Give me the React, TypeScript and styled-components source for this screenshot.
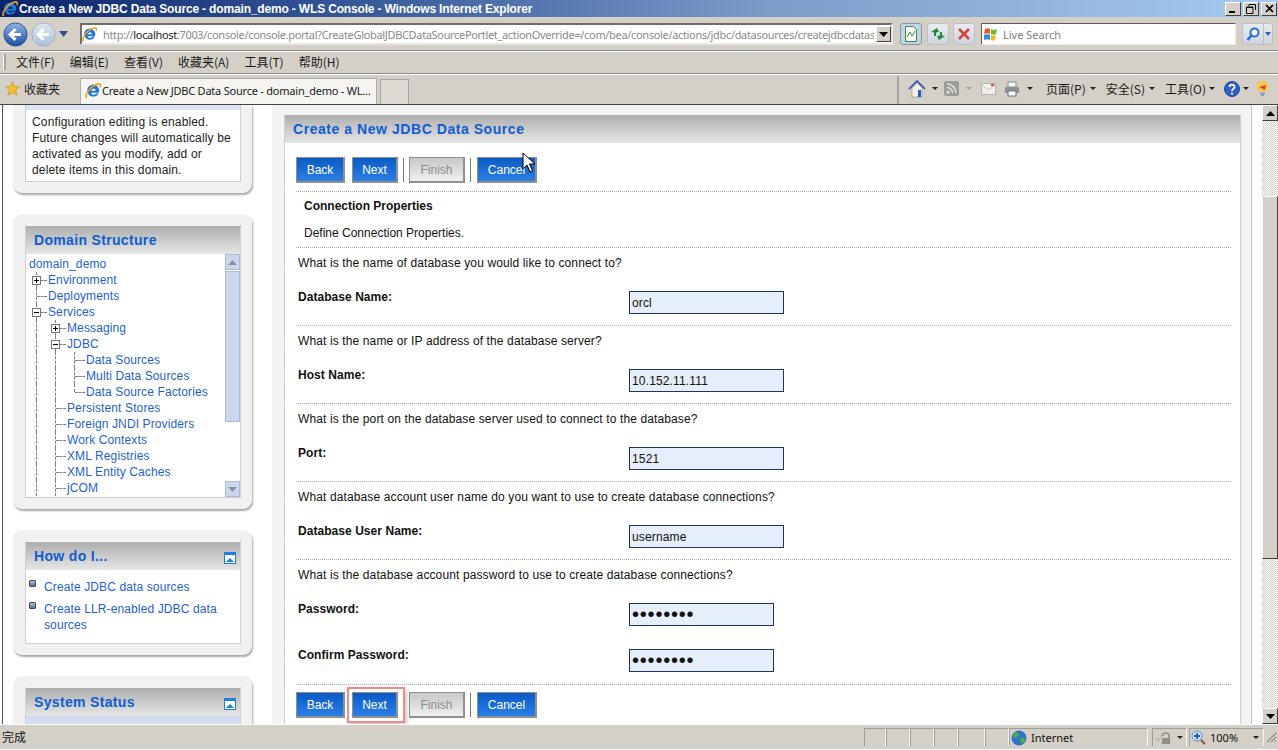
import styled, { createGlobalStyle } from "styled-components";

const GlobalStyle = createGlobalStyle`
  html, body {
    margin: 0;
    padding: 0;
    overflow: hidden;
  }
  body {
    font-family: "Liberation Sans", Arial, sans-serif;
    font-size: 12px;
  }
`;

const UI_FONT = `"Noto Sans", "Noto Sans CJK SC", sans-serif`;

const Page = styled.div`
  width: 1278px;
  height: 750px;
  display: flex;
  flex-direction: column;
  overflow: hidden;
  background: #d4d0c8;
`;

/* browser chrome */
const TitleBar = styled.div`
  height: 17px;
  flex: none;
  display: flex;
  align-items: center;
  padding: 0 1px 0 2px;
  background: linear-gradient(90deg, #0a246a 0%, #3a5d9c 30%, #7d9bc9 60%, #a6caf0 100%);
`;

const TitleText = styled.div`
  flex: 1;
  margin-left: 1px;
  color: #fff;
  font: bold 12px "Liberation Sans", sans-serif;
  letter-spacing: -0.165px;
  white-space: nowrap;
`;

const WindowButton = styled.div`
  width: 16px;
  height: 14px;
  margin-left: 2px;
  display: flex;
  align-items: center;
  justify-content: center;
  background: #d4d0c8;
  border: 1px solid;
  border-color: #fff #404040 #404040 #fff;
  box-sizing: border-box;
`;

const AddressBar = styled.div`
  height: 34px;
  flex: none;
  display: flex;
  align-items: center;
  padding: 1px 6px 0 3px;
  border-bottom: 1px solid #8c8a84;
  box-sizing: border-box;
`;

const NavGroup = styled.div`
  width: 77px;
  height: 28px;
  flex: none;
  display: flex;
  align-items: center;
  gap: 3px;
`;

const AddressBox = styled.div`
  width: 813px;
  height: 22px;
  flex: none;
  display: flex;
  align-items: center;
  background: #fff;
  border: 2px solid;
  border-color: #6f6e69 #e8e6e0 #e8e6e0 #6f6e69;
  box-sizing: border-box;
`;

const UrlText = styled.div`
  width: 774px;
  margin-left: 6px;
  overflow: hidden;
  white-space: nowrap;
  color: #8a8a8a;
  font: 11px ${UI_FONT};
  letter-spacing: -0.33px;
  b {
    font-weight: 400;
    color: #222;
  }
`;

const ComboArrow = styled.div`
  width: 15px;
  height: 16px;
  margin-left: 2px;
  display: flex;
  align-items: center;
  justify-content: center;
  background: #d4d0c8;
  border: 1px solid;
  border-color: #fff #404040 #404040 #fff;
  box-sizing: border-box;
`;

const GlassButton = styled.div<{ $gap: number; $active?: boolean }>`
  width: 22px;
  height: 22px;
  flex: none;
  margin-left: ${(p) => p.$gap}px;
  display: flex;
  align-items: center;
  justify-content: center;
  border: 1px solid ${(p) => (p.$active ? "#7f97ad" : "#bdbfc4")};
  border-radius: 3px;
  background: ${(p) => (p.$active ? "#c5d5df" : "linear-gradient(#e9ecf2, #cdd3de)")};
  box-sizing: border-box;
`;

const SearchBox = styled.div`
  width: 255px;
  height: 22px;
  flex: none;
  margin-left: 6px;
  display: flex;
  align-items: center;
  gap: 4px;
  padding-left: 1px;
  background: #fff;
  border: 1px solid;
  border-color: #5c5b57 #eeece6 #eeece6 #5c5b57;
  box-sizing: border-box;
  color: #808080;
  font: 11px ${UI_FONT};
`;

const SearchButton = styled.div`
  width: 31px;
  height: 22px;
  flex: none;
  margin-left: 6px;
  display: flex;
  align-items: center;
  background: linear-gradient(#e9ecf2, #cdd3de);
  border: 1px solid #bdbfc4;
  border-radius: 3px;
  box-sizing: border-box;
`;

const SearchCell = styled.div<{ $w: number }>`
  width: ${(p) => p.$w}px;
  height: 100%;
  display: flex;
  align-items: center;
  justify-content: center;
  & + & {
    border-left: 1px solid #bdbfc4;
  }
`;

const MenuBar = styled.div`
  height: 23px;
  flex: none;
  display: flex;
  align-items: center;
  gap: 15px;
  padding: 0 0 2px 3px;
  border-top: 1px solid #fff;
  border-bottom: 1px solid #8c8a84;
  box-sizing: border-box;
  color: #1a1a1a;
  font: 12px "Noto Sans CJK SC", sans-serif;
`;

const Grip = styled.div`
  width: 2px;
  height: 16px;
  margin-right: -5px;
  background: #a5a39d;
  border-left: 1px solid #fff;
`;

const MenuItem = styled.span`
  white-space: nowrap;
`;

const TabBar = styled.div`
  height: 30px;
  flex: none;
  display: flex;
  align-items: flex-end;
  padding-left: 5px;
  border-top: 1px solid #fff;
  box-sizing: border-box;
  font: 12px "Noto Sans CJK SC", sans-serif;
  color: #1a1a1a;
`;

const FavoritesLink = styled.div`
  width: 75px;
  height: 28px;
  flex: none;
  display: flex;
  align-items: center;
  gap: 4px;
  padding-bottom: 3px;
  box-sizing: border-box;
`;

const Tab = styled.div`
  width: 297px;
  height: 26px;
  flex: none;
  display: flex;
  align-items: center;
  gap: 1px;
  padding: 0 0 2px 4px;
  background: #f5f4f1;
  border: 1px solid #aeaca6;
  border-bottom: 0;
  box-sizing: border-box;
  font: 11px ${UI_FONT};
  letter-spacing: -0.22px;
  white-space: nowrap;
`;

const NewTab = styled.div`
  width: 29px;
  height: 25px;
  flex: none;
  margin-left: 3px;
  background: #dcd9d2;
  border: 1px solid #a5a39d;
  border-bottom: 0;
  box-sizing: border-box;
`;

const Tools = styled.div`
  flex: 1;
  height: 28px;
  margin-left: 488px;
  display: flex;
  align-items: center;
  padding: 0 0 3px 9px;
  box-sizing: border-box;
  border-left: 2px solid #a5a39d;
`;

const ToolIcon = styled.div<{ $w: number; $gap?: number }>`
  width: ${(p) => p.$w}px;
  height: 18px;
  flex: none;
  margin-left: ${(p) => p.$gap ?? 0}px;
  display: flex;
  align-items: center;
  justify-content: center;
`;

const ToolCaret = styled.span<{ $gap: number; $muted?: boolean }>`
  width: 0;
  height: 0;
  flex: none;
  margin-left: ${(p) => p.$gap}px;
  border: 3px solid transparent;
  border-bottom: 0;
  border-top: 3px solid ${(p) => (p.$muted ? "#a0a0a0" : "#222")};
`;

const ToolText = styled.span<{ $gap: number }>`
  margin-left: ${(p) => p.$gap}px;
  white-space: nowrap;
`;

/* content area */
const Content = styled.div`
  flex: 1;
  min-height: 0;
  display: flex;
  position: relative;
  border-top: 1px solid #444;
  background: #fff;
  overflow: hidden;
`;

const Sidebar = styled.div`
  width: 259px;
  flex: none;
  margin-left: 2px;
  padding-left: 10px;
  border-left: 1px solid #555;
`;

const SidePanel = styled.div<{ $top?: boolean }>`
  width: 239px;
  margin-bottom: 21px;
  padding: ${(p) => (p.$top ? "0 11px 11px 12px" : "11px 11px 11px 12px")};
  box-sizing: border-box;
  background: #f1f1f1;
  border-radius: ${(p) => (p.$top ? "0 0 9px 9px" : "9px")};
  box-shadow: 1px 2px 2px #a8a8a8;
`;

const SideInner = styled.div`
  background: #fff;
  border: 1px solid #cfcfcf;
  border-top: 0;
`;

const ChangeHint = styled.div`
  height: 76px;
  padding: 4px 6px 0;
  box-sizing: border-box;
  border-top: 5px solid #dbe4f4;
  color: #222;
  line-height: 16px;
  letter-spacing: 0.15px;
`;

const PanelHeader = styled.div`
  height: 28px;
  display: flex;
  align-items: center;
  justify-content: space-between;
  padding: 0 4px 0 8px;
  border-top: 1px solid #f5f5f5;
  background: linear-gradient(#aeaeae, #e6e6e6);
`;

const PanelTitle = styled.h3<{ $wide?: boolean }>`
  margin: 0;
  color: #0f5ed1;
  font: bold 14px "Liberation Sans", sans-serif;
  letter-spacing: ${(p) => (p.$wide ? "0.55px" : "0.33px")};
`;

const TreeBox = styled.div`
  height: 243px;
  display: flex;
  overflow: hidden;
`;

const TreeList = styled.div`
  flex: 1;
  padding: 2px 0 0 1px;
`;

const TreeRow = styled.div`
  height: 16px;
  display: flex;
  align-items: center;
  color: #1f5fd6;
  white-space: nowrap;
  letter-spacing: 0.12px;
`;

const RootLabel = styled.span`
  margin-left: 2px;
`;

const TreeCell = styled.span<{ $kind: string }>`
  position: relative;
  width: 19px;
  height: 16px;
  flex: none;
  &::before {
    content: "";
    display: block;
    position: absolute;
    left: 9px;
    top: 0;
    height: ${(p) => (p.$kind === "last" ? "8px" : "16px")};
    border-left: 1px dashed #808080;
  }
  &::after {
    content: "";
    display: ${(p) => (p.$kind === "line" ? "none" : "block")};
    position: absolute;
    left: 10px;
    top: 8px;
    width: 10px;
    border-top: 1px dashed #808080;
  }
`;

const Expander = styled.span<{ $open: boolean }>`
  position: absolute;
  z-index: 1;
  left: 5px;
  top: 4px;
  width: 9px;
  height: 9px;
  box-sizing: border-box;
  background: #fff;
  border: 1px solid #777;
  &::before {
    content: "";
    position: absolute;
    left: 1px;
    top: 3px;
    width: 5px;
    height: 1px;
    background: #000;
  }
  &::after {
    content: "";
    display: ${(p) => (p.$open ? "none" : "block")};
    position: absolute;
    left: 3px;
    top: 1px;
    width: 1px;
    height: 5px;
    background: #000;
  }
`;

const TreeLabel = styled.span`
  margin-left: 2px;
`;

const TreeScroll = styled.div`
  width: 15px;
  flex: none;
  display: flex;
  flex-direction: column;
`;

const TreeScrollButton = styled.div`
  height: 16px;
  flex: none;
  display: flex;
  align-items: center;
  justify-content: center;
  background: #cbd8ec;
  border: 1px solid #a9bbd6;
  box-sizing: border-box;
`;

const TreeThumb = styled.div`
  height: 151px;
  flex: none;
  margin-top: 1px;
  background: #cbd8ec;
  border: 1px solid #a9bbd6;
  box-sizing: border-box;
`;

const TreeTrack = styled.div`
  flex: 1;
`;

const HelpList = styled.ul`
  height: 73px;
  margin: 0;
  padding: 9px 0 0;
  box-sizing: border-box;
  list-style: none;
`;

const HelpItem = styled.li`
  position: relative;
  margin-bottom: 6px;
  padding-left: 18px;
  padding-right: 16px;
  color: #1f5fd6;
  line-height: 16px;
  letter-spacing: 0.12px;
  &::before {
    content: "";
    position: absolute;
    left: 3px;
    top: 1px;
    width: 7px;
    height: 7px;
    box-sizing: border-box;
    border-radius: 1px;
    background: linear-gradient(#b4c0d2, #5c6c88);
    border: 1px solid #3c4a66;
  }
`;

const StatusFill = styled.div`
  height: 40px;
  background: #d2deef;
`;

const ToggleIcon = styled.svg`
  width: 12px;
  height: 12px;
  margin-top: 3px;
  flex: none;
`;

const Main = styled.div`
  width: 980px;
  flex: none;
  padding: 10px 11px 0 12px;
  box-sizing: border-box;
  background: #f3f3f3;
  box-shadow: inset -1px 0 0 #c4c4c4;
`;

const MainInner = styled.div`
  background: #fff;
  border-left: 1px solid #cfcfcf;
  border-right: 1px solid #cfcfcf;
  height: 620px;
`;

const MainHeader = styled.div`
  height: 28px;
  display: flex;
  align-items: center;
  padding-left: 8px;
  background: linear-gradient(#aeaeae, #e6e6e6);
`;

const MainBody = styled.div`
  padding: 0 9px 0 11px;
`;

const ButtonRow = styled.div<{ $top: number }>`
  height: 26px;
  display: flex;
  align-items: center;
  margin-top: ${(p) => p.$top}px;
`;

const ActionButton = styled.div<{ $w: number; $off?: boolean; $gap?: number }>`
  position: relative;
  width: ${(p) => p.$w}px;
  height: 26px;
  margin-left: ${(p) => p.$gap ?? 0}px;
  flex: none;
  display: flex;
  align-items: center;
  justify-content: center;
  box-sizing: border-box;
  border: 2px solid #909090;
  border-top-width: 1px;
  border-left-width: 1px;
  color: ${(p) => (p.$off ? "#8d8d8d" : "#fff")};
  background: ${(p) =>
    p.$off ? "linear-gradient(#c8c8c8, #f0f0f0)" : "linear-gradient(#0a5ac4, #2a7fe6)"};
`;

const Highlight = styled.div`
  position: absolute;
  left: -6px;
  top: -6px;
  width: 58px;
  height: 36px;
  box-sizing: border-box;
  border: 2px solid #f28a8a;
  box-shadow: 2px 3px 4px rgba(0, 0, 0, 0.22);
`;

const Separator = styled.div<{ $gap: number }>`
  width: 1px;
  height: 24px;
  flex: none;
  margin-left: ${(p) => p.$gap}px;
  background: #777;
`;

const SectionHead = styled.div`
  height: 57px;
  margin-top: 8px;
  padding: 6px 0 0 8px;
  box-sizing: border-box;
  border-top: 1px dotted #aaa;
  border-bottom: 1px dotted #aaa;
  color: #111;
  line-height: 16px;
`;

const SectionTitle = styled.div`
  font-weight: bold;
  margin-bottom: 11px;
`;

const Block = styled.div<{ $h: number }>`
  height: ${(p) => p.$h}px;
  box-sizing: border-box;
  padding-left: 2px;
  border-bottom: 1px dotted #aaa;
  color: #111;
`;

const Question = styled.div`
  height: 32px;
  line-height: 30px;
  letter-spacing: 0.12px;
`;

const Field = styled.div<{ $top: number }>`
  display: flex;
  align-items: flex-start;
  margin-top: ${(p) => p.$top}px;
`;

const FieldLabel = styled.label`
  width: 331px;
  flex: none;
  padding-top: 2px;
  font-weight: bold;
  line-height: 16px;
  letter-spacing: 0.05px;
`;

const TextInput = styled.input<{ $w: number; $secret?: boolean }>`
  width: ${(p) => p.$w}px;
  height: 23px;
  margin: 4px 0 0;
  padding: 0 2px;
  box-sizing: border-box;
  border: 1px solid #1e3560;
  border-radius: 0;
  outline: none;
  background: #e7eefb;
  color: #111;
  font: ${(p) => (p.$secret ? "20px" : "12px")} "Liberation Sans", sans-serif;
  letter-spacing: ${(p) => (p.$secret ? "0.8px" : "0.15px")};
`;

const PageScroll = styled.div`
  width: 16px;
  flex: none;
  margin-left: 10px;
  display: flex;
  flex-direction: column;
  background-color: #fff;
  background-image: conic-gradient(#d4d0c8 25%, #fff 0 50%, #d4d0c8 0 75%, #fff 0);
  background-size: 2px 2px;
`;

const ScrollButton = styled.div`
  height: 16px;
  flex: none;
  display: flex;
  align-items: center;
  justify-content: center;
  background: #d4d0c8;
  border: 1px solid;
  border-color: #fff #404040 #404040 #fff;
  box-sizing: border-box;
`;

const ScrollThumb = styled.div`
  height: 363px;
  flex: none;
  margin-top: 75px;
  background: #d4d0c8;
  border: 1px solid;
  border-color: #fff #404040 #404040 #fff;
  box-sizing: border-box;
`;

const ScrollTrack = styled.div`
  flex: 1;
`;

const Cursor = styled.svg`
  position: absolute;
  left: 522px;
  top: 47px;
  width: 14px;
  height: 21px;
`;

/* status bar */
const StatusBar = styled.div`
  height: 26px;
  flex: none;
  display: flex;
  align-items: center;
  padding: 2px 0 2px;
  box-sizing: border-box;
  border-top: 1px solid #fff;
  border-bottom: 1px solid #fff;
  font: 12px "Noto Sans CJK SC", sans-serif;
  color: #111;
`;

const StatusText = styled.div`
  width: 864px;
  flex: none;
  padding: 0 0 2px 2px;
  box-sizing: border-box;
`;

const StatusCell = styled.div<{ $w: number; $gap?: number }>`
  width: ${(p) => p.$w}px;
  height: 18px;
  flex: none;
  margin-left: ${(p) => p.$gap ?? 0}px;
  display: flex;
  align-items: center;
  gap: 4px;
  padding-left: 1px;
  box-sizing: border-box;
  border-top: 1px solid #a09e98;
  border-left: 1px solid #a09e98;
  border-right: 1px solid #f5f4f0;
  font: 11px ${UI_FONT};
`;

const StatusGrip = styled.svg`
  margin-left: 1px;
  width: 12px;
  height: 14px;
  flex: none;
`;

const SmallCaret = styled.span<{ $gap: number }>`
  width: 0;
  height: 0;
  margin-left: ${(p) => p.$gap}px;
  border: 3px solid transparent;
  border-bottom: 0;
  border-top: 3px solid #222;
`;

/* icons */
const IeLogo = ({ size = 16 }: { size?: number }) => (
  <svg width={size} height={size} viewBox="0 0 16 16" style={{ flex: "none" }}>
    <path
      d="M2.500 5.500a6 6 0 0 1 11.300 4.300H6c.3 2.300 3.700 2.500 5.200.7h2.400c-1.700 4-8.700 4.300-10.500-.1a6.500 6.500 0 0 1-.6-4.900zM6 7.700h4.900C10.300 5.200 6.700 5.200 6 7.700z"
      fill="#2278d8"
    />
    <path d="M1.500 15.200C-.5 12 5 3 12.800 1c2.300-.5 3.200 1 2.200 3.300" fill="none" stroke="#f0a21e" strokeWidth="1.600" />
  </svg>
);

const NavCircle = ({ size, muted }: { size: number; muted?: boolean }) => (
  <svg width={size} height={size} viewBox="0 0 28 28" style={{ flex: "none" }}>
    <defs>
      <linearGradient id={muted ? "navB" : "navA"} x1="0" y1="0" x2="0" y2="1">
        <stop offset="0" stopColor={muted ? "#dfe6f1" : "#8fb4e6"} />
        <stop offset="1" stopColor={muted ? "#aebfd8" : "#1c4ea8"} />
      </linearGradient>
    </defs>
    <circle cx="14" cy="14" r="13" fill={`url(#${muted ? "navB" : "navA"})`} stroke={muted ? "#9cabc0" : "#2b4c86"} />
    <path d="M20 14H9M14 8l-6 6 6 6" fill="none" stroke="#fff" strokeWidth="3.400" />
  </svg>
);

const Caret = () => (
  <svg width="9" height="6" viewBox="0 0 9 6">
    <path d="M0 0h9L4.500 6z" fill="#2c4f91" />
  </svg>
);

const BlackArrow = ({ up }: { up?: boolean }) => (
  <svg width="9" height="5" viewBox="0 0 9 5">
    <path d={up ? "M0 5h9L4.500 0z" : "M0 0h9L4.500 5z"} fill="#000" />
  </svg>
);

const GreyArrow = ({ up }: { up?: boolean }) => (
  <svg width="9" height="5" viewBox="0 0 9 5">
    <path d={up ? "M0 5h9L4.500 0z" : "M0 0h9L4.500 5z"} fill="#8794a8" />
  </svg>
);

const Toggle = () => (
  <ToggleIcon viewBox="0 0 12 12">
    <rect width="12" height="12" fill="#1d7fe0" />
    <rect x="1" y="3" width="10" height="8" fill="#fff" />
    <path d="M2 10l4-4 4 4z" fill="#1d7fe0" />
  </ToggleIcon>
);

const WinLogo = () => (
  <svg width="16" height="16" viewBox="0 0 16 16" style={{ flex: "none" }}>
    <path d="M2 3c2-1 3-1 5 0v5C5 7 4 7 1 8z" fill="#e8582c" />
    <path d="M8 3c2 1 4 1 6 0l-1 5c-2 1-3 1-5 0z" fill="#7cba2e" />
    <path d="M1 9c2-1 4-1 6 0v5c-2-1-4-1-6 0z" fill="#2f8ee0" />
    <path d="M8 9c2 1 3 1 5 0l-1 5c-2 1-3 1-4 0z" fill="#f3bc1c" />
  </svg>
);

const treeRows: { label: string; cells: string[]; toggle?: "plus" | "minus" }[] = [
  { label: "Environment", cells: [], toggle: "plus" },
  { label: "Deployments", cells: ["branch"] },
  { label: "Services", cells: [], toggle: "minus" },
  { label: "Messaging", cells: ["line"], toggle: "plus" },
  { label: "JDBC", cells: ["line"], toggle: "minus" },
  { label: "Data Sources", cells: ["line", "line", "branch"] },
  { label: "Multi Data Sources", cells: ["line", "line", "branch"] },
  { label: "Data Source Factories", cells: ["line", "line", "last"] },
  { label: "Persistent Stores", cells: ["line", "branch"] },
  { label: "Foreign JNDI Providers", cells: ["line", "branch"] },
  { label: "Work Contexts", cells: ["line", "branch"] },
  { label: "XML Registries", cells: ["line", "branch"] },
  { label: "XML Entity Caches", cells: ["line", "branch"] },
  { label: "jCOM", cells: ["line", "branch"] },
];

const questions = [
  { q: "What is the name of database you would like to connect to?", label: "Database Name:", value: "orcl" },
  { q: "What is the name or IP address of the database server?", label: "Host Name:", value: "10.152.11.111" },
  { q: "What is the port on the database server used to connect to the database?", label: "Port:", value: "1521" },
  {
    q: "What database account user name do you want to use to create database connections?",
    label: "Database User Name:",
    value: "username",
  },
];

const Buttons = ({ marked }: { marked?: boolean }) => (
  <>
    <ActionButton $w={49}>Back</ActionButton>
    <ActionButton $w={46} $gap={7}>
      Next
      {marked && <Highlight />}
    </ActionButton>
    <Separator $gap={5} />
    <ActionButton $w={56} $gap={5} $off>
      Finish
    </ActionButton>
    <Separator $gap={5} />
    <ActionButton $w={60} $gap={6}>
      Cancel
    </ActionButton>
  </>
);

const App = () => {
  return (
    <Page>
      <GlobalStyle />
      <TitleBar>
        <IeLogo />
        <TitleText>Create a New JDBC Data Source - domain_demo - WLS Console - Windows Internet Explorer</TitleText>
        <WindowButton>
          <svg width="8" height="8" viewBox="0 0 8 8">
            <rect x="0" y="6" width="6" height="2" />
          </svg>
        </WindowButton>
        <WindowButton>
          <svg width="10" height="10" viewBox="0 0 10 10">
            <path d="M3 .5h6.500V6M3 .5V2M.5 3H7v6.500H.5zM.5 3.500H7" fill="none" stroke="#000" />
          </svg>
        </WindowButton>
        <WindowButton>
          <svg width="9" height="9" viewBox="0 0 9 9">
            <path d="M1 1l7 7M8 1L1 8" stroke="#000" strokeWidth="1.700" />
          </svg>
        </WindowButton>
      </TitleBar>

      <AddressBar>
        <NavGroup>
          <NavCircle size={25} />
          <NavCircle size={25} muted />
          <Caret />
        </NavGroup>
        <AddressBox>
          <IeLogo size={15} />
          <UrlText>
            http://<b>localhost</b>:7003/console/console.portal?CreateGlobalJDBCDataSourcePortlet_actionOverride=/com/bea/console/actions/jdbc/datasources/createjdbcdatas
          </UrlText>
          <ComboArrow>
            <BlackArrow />
          </ComboArrow>
        </AddressBox>
        <GlassButton $gap={7} $active>
          <svg width="14" height="16" viewBox="0 0 14 16">
            <path d="M1.500.5h8l3 3v12h-11z" fill="#fff" stroke="#2e9444" />
            <path d="M3 11l3-5 2 4 3-5" fill="none" stroke="#2e9444" />
          </svg>
        </GlassButton>
        <GlassButton $gap={5}>
          <svg width="16" height="16" viewBox="0 0 16 16">
            <path d="M7 2L1 6l3 .5V10h2V6.500L9 6z" fill="#23873c" />
            <path d="M9 14l6-4-3-.5V6h-2v3.500L7 10z" fill="#23873c" />
          </svg>
        </GlassButton>
        <GlassButton $gap={4}>
          <svg width="12" height="12" viewBox="0 0 12 12">
            <path d="M1 1l10 10M11 1L1 11" stroke="#d0453c" strokeWidth="2.600" />
          </svg>
        </GlassButton>
        <SearchBox>
          <WinLogo />
          Live Search
        </SearchBox>
        <SearchButton>
          <SearchCell $w={21}>
            <svg width="14" height="15" viewBox="0 0 14 15">
              <circle cx="8.500" cy="5.500" r="4" fill="#fff" stroke="#1f6fe0" strokeWidth="2" />
              <path d="M5.500 8.500L1.500 13" stroke="#1f6fe0" strokeWidth="2.600" />
            </svg>
          </SearchCell>
          <SearchCell $w={8}>
            <svg width="6" height="4" viewBox="0 0 6 4">
              <path d="M0 0h6L3 4z" fill="#2c62c0" />
            </svg>
          </SearchCell>
        </SearchButton>
      </AddressBar>

      <MenuBar>
        <Grip />
        <MenuItem>文件(F)</MenuItem>
        <MenuItem>编辑(E)</MenuItem>
        <MenuItem>查看(V)</MenuItem>
        <MenuItem>收藏夹(A)</MenuItem>
        <MenuItem>工具(T)</MenuItem>
        <MenuItem>帮助(H)</MenuItem>
      </MenuBar>

      <TabBar>
        <FavoritesLink>
          <svg width="15" height="15" viewBox="0 0 15 15">
            <path d="M7.500.5l2 5 5 .3-3.900 3.200 1.300 5.300-4.400-2.900-4.400 2.900 1.300-5.300L.5 5.800l5-.3z" fill="#f3c12c" stroke="#c98a17" strokeWidth=".6" />
          </svg>
          收藏夹
        </FavoritesLink>
        <Tab>
          <IeLogo />
          Create a New JDBC Data Source - domain_demo - WL...
        </Tab>
        <NewTab />
        <Tools>
          <ToolIcon $w={18}>
            <svg width="18" height="18" viewBox="0 0 18 18">
              <path d="M4 8v9h10V8L9 3z" fill="#f4f1e6" stroke="#7b8aa0" strokeWidth=".6" />
              <path d="M1 9l8-8 8 8" fill="none" stroke="#2a4fa8" strokeWidth="1.600" />
              <rect x="10" y="10" width="3" height="7" fill="#2a5cae" />
            </svg>
          </ToolIcon>
          <ToolCaret $gap={6} />
          <ToolIcon $w={16} $gap={5}>
            <svg width="15" height="15" viewBox="0 0 15 15">
              <rect width="15" height="15" rx="2" fill="#9d9d9a" />
              <circle cx="4" cy="11" r="1.600" fill="#e2e2df" />
              <path d="M3 6.500a5.500 5.500 0 0 1 5.500 5.500M3 3a9 9 0 0 1 9 9" fill="none" stroke="#e2e2df" strokeWidth="1.500" />
            </svg>
          </ToolIcon>
          <ToolCaret $gap={7} $muted />
          <ToolIcon $w={15} $gap={9}>
            <svg width="15" height="12" viewBox="0 0 15 12">
              <rect x=".5" y=".5" width="14" height="11" fill="#f1f0ec" stroke="#b5b4ae" />
              <path d="M1 2l6.500 5L14 2" fill="none" stroke="#c9c8c2" />
              <rect x="10" y="1" width="3" height="2" fill="#d8453c" />
            </svg>
          </ToolIcon>
          <ToolIcon $w={16} $gap={8}>
            <svg width="16" height="16" viewBox="0 0 16 16">
              <rect x="4" y="1" width="8" height="5" fill="#fafafa" stroke="#8a8a8a" />
              <rect x="1" y="6" width="14" height="6" rx="1" fill="#8e9298" />
              <rect x="4" y="10" width="8" height="5" fill="#fff" stroke="#6f7379" />
            </svg>
          </ToolIcon>
          <ToolCaret $gap={7} />
          <ToolText $gap={13}>页面(P)</ToolText>
          <ToolCaret $gap={4} />
          <ToolText $gap={10}>安全(S)</ToolText>
          <ToolCaret $gap={4} />
          <ToolText $gap={10}>工具(O)</ToolText>
          <ToolCaret $gap={3} />
          <ToolIcon $w={16} $gap={9}>
            <svg width="16" height="16" viewBox="0 0 16 16">
              <circle cx="8" cy="8" r="7.500" fill="#2f63c4" stroke="#24459a" />
              <path d="M5.500 6c0-3.200 5-3.200 5 0 0 2-2.500 1.800-2.500 4M8 11.500v2" fill="none" stroke="#fff" strokeWidth="1.700" />
            </svg>
          </ToolIcon>
          <ToolCaret $gap={3} />
          <ToolIcon $w={14} $gap={6}>
            <svg width="13" height="17" viewBox="0 0 13 17">
              <circle cx="6.500" cy="6.500" r="6" fill="#f5c85a" />
              <path d="M3 7l7-2-1 5z" fill="#e0452c" />
              <path d="M4 13.500h5M5 15.500h3" stroke="#6a9ad0" strokeWidth="1.500" />
            </svg>
          </ToolIcon>
        </Tools>
      </TabBar>

      <Content>
        <Sidebar>
          <SidePanel $top>
            <SideInner>
              <ChangeHint>
                Configuration editing is enabled. Future changes will automatically be activated as you modify, add or
                delete items in this domain.
              </ChangeHint>
            </SideInner>
          </SidePanel>

          <SidePanel>
            <SideInner>
              <PanelHeader>
                <PanelTitle>Domain Structure</PanelTitle>
              </PanelHeader>
              <TreeBox>
                <TreeList>
                  <TreeRow>
                    <RootLabel>domain_demo</RootLabel>
                  </TreeRow>
                  {treeRows.map((row) => (
                    <TreeRow key={row.label}>
                      {row.cells.map((kind, i) => (
                        <TreeCell key={i} $kind={kind} />
                      ))}
                      {row.toggle && (
                        <TreeCell $kind="branch">
                          <Expander $open={row.toggle === "minus"} />
                        </TreeCell>
                      )}
                      <TreeLabel>{row.label}</TreeLabel>
                    </TreeRow>
                  ))}
                </TreeList>
                <TreeScroll>
                  <TreeScrollButton>
                    <GreyArrow up />
                  </TreeScrollButton>
                  <TreeThumb />
                  <TreeTrack />
                  <TreeScrollButton>
                    <GreyArrow />
                  </TreeScrollButton>
                </TreeScroll>
              </TreeBox>
            </SideInner>
          </SidePanel>

          <SidePanel>
            <SideInner>
              <PanelHeader>
                <PanelTitle>How do I...</PanelTitle>
                <Toggle />
              </PanelHeader>
              <HelpList>
                <HelpItem>Create JDBC data sources</HelpItem>
                <HelpItem>Create LLR-enabled JDBC data sources</HelpItem>
              </HelpList>
            </SideInner>
          </SidePanel>

          <SidePanel>
            <SideInner>
              <PanelHeader>
                <PanelTitle>System Status</PanelTitle>
                <Toggle />
              </PanelHeader>
              <StatusFill />
            </SideInner>
          </SidePanel>
        </Sidebar>

        <Main>
          <MainInner>
            <MainHeader>
              <PanelTitle $wide>Create a New JDBC Data Source</PanelTitle>
            </MainHeader>
            <MainBody>
              <ButtonRow $top={14}>
                <Buttons />
              </ButtonRow>
              <SectionHead>
                <SectionTitle>Connection Properties</SectionTitle>
                Define Connection Properties.
              </SectionHead>
              {questions.map((item) => (
                <Block key={item.label} $h={78}>
                  <Question>{item.q}</Question>
                  <Field $top={7}>
                    <FieldLabel>{item.label}</FieldLabel>
                    <TextInput $w={155} readOnly defaultValue={item.value} />
                  </Field>
                </Block>
              ))}
              <Block $h={125}>
                <Question>What is the database account password to use to create database connections?</Question>
                <Field $top={7}>
                  <FieldLabel>Password:</FieldLabel>
                  <TextInput $w={145} $secret type="password" readOnly defaultValue="password" />
                </Field>
                <Field $top={19}>
                  <FieldLabel>Confirm Password:</FieldLabel>
                  <TextInput $w={145} $secret type="password" readOnly defaultValue="password" />
                </Field>
              </Block>
              <ButtonRow $top={7}>
                <Buttons marked />
              </ButtonRow>
            </MainBody>
          </MainInner>
        </Main>

        <PageScroll>
          <ScrollButton>
            <BlackArrow up />
          </ScrollButton>
          <ScrollThumb />
          <ScrollTrack />
          <ScrollButton>
            <BlackArrow />
          </ScrollButton>
        </PageScroll>

        <Cursor viewBox="0 0 14 21">
          <path d="M1 1v16l4-4 3 7 2.500-1-3-7h5.500z" fill="#fff" stroke="#000" />
        </Cursor>
      </Content>

      <StatusBar>
        <StatusText>完成</StatusText>
        <StatusCell $w={22} />
        <StatusCell $w={24} />
        <StatusCell $w={24} />
        <StatusCell $w={24} />
        <StatusCell $w={27} />
        <StatusCell $w={24} />
        <StatusCell $w={139}>
          <svg width="16" height="16" viewBox="0 0 16 16">
            <circle cx="8" cy="8" r="7.500" fill="#2f74c8" />
            <path d="M4 2c3 0 4 2 3 4S3 8 2 6M10 8c3-1 5 1 4 3s-3 3-4 2-1-3 0-5z" fill="#4fae3f" />
          </svg>
          Internet
        </StatusCell>
        <StatusCell $w={35} $gap={4}>
          <svg width="17" height="15" viewBox="0 0 17 15">
            <path d="M1 8l3 3 5-8" fill="none" stroke="#b9b8b2" strokeWidth="1.500" />
            <path d="M9 6a3 3 0 0 1 6 0v2" fill="none" stroke="#8f8e88" strokeWidth="1.500" />
            <rect x="8" y="8" width="8" height="6" fill="#8f8e88" />
          </svg>
          <SmallCaret $gap={2} />
        </StatusCell>
        <StatusCell $w={75} $gap={2}>
          <svg width="15" height="15" viewBox="0 0 15 15">
            <circle cx="6" cy="6" r="5" fill="#cfe0f6" stroke="#6b8fc2" />
            <path d="M6 3v6M3 6h6" stroke="#1f5fc4" strokeWidth="1.800" />
            <path d="M10 10l4 4" stroke="#8a5a2c" strokeWidth="2" />
          </svg>
          100%
          <SmallCaret $gap={11} />
        </StatusCell>
        <StatusGrip viewBox="0 0 12 14">
          <path d="M11 3l-9 9M11 7l-5 5M11 11l-1 1" stroke="#8f8e88" strokeWidth="1.200" />
        </StatusGrip>
      </StatusBar>
    </Page>
  );
};

export default App;
